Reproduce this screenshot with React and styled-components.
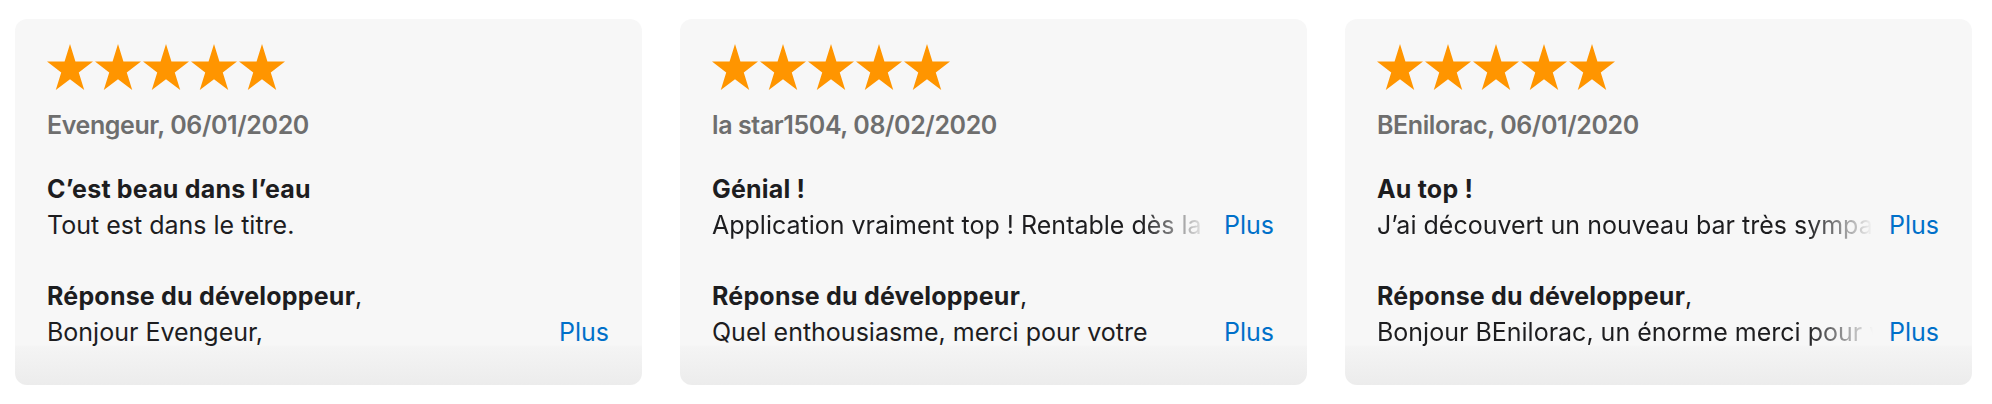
import styled, { createGlobalStyle } from "styled-components";

const reviews = [
  {
    author: "Evengeur, 06/01/2020",
    title: "C’est beau dans l’eau",
    body: "Tout est dans le titre.",
    bodyMore: false,
    reply: "Bonjour Evengeur,",
    replyFade: false,
  },
  {
    author: "la star1504, 08/02/2020",
    title: "Génial !",
    body: "Application vraiment top ! Rentable dès la première utilisation",
    bodyMore: true,
    reply: "Quel enthousiasme, merci pour votre",
    replyFade: false,
  },
  {
    author: "BEnilorac, 06/01/2020",
    title: "Au top !",
    body: "J’ai découvert un nouveau bar très sympa grâce à l’application",
    bodyMore: true,
    reply: "Bonjour BEnilorac, un énorme merci pour votre message",
    replyFade: true,
  },
];

const GlobalStyle = createGlobalStyle`
  html, body {
    margin: 0;
    padding: 0;
    background: #ffffff;
  }
  body {
    font-family: Inter, "Noto Sans", "Liberation Sans", sans-serif;
    color: #1d1d1f;
    -webkit-font-smoothing: antialiased;
  }
`;

const Star = ({ size = 46 }) => (
  <svg width={size} height={size} viewBox="0 0 46 46">
    <polygon
      fill="#ff9500"
      points="23,0 28.43,17.57 46,17.57 31.78,28.43 37.23,46 23,35.14 8.77,46 14.22,28.43 0,17.57 17.57,17.57"
    />
  </svg>
);

const App = () => (
  <>
    <GlobalStyle />
    <Reviews>
      {reviews.map((r) => (
        <Card key={r.author}>
          <Stars>
            {[0, 1, 2, 3, 4].map((i) => (
              <Star key={i} />
            ))}
          </Stars>
          <Author>{r.author}</Author>
          <Title>{r.title}</Title>
          <Row>
            <Text $fade={r.bodyMore}>{r.body}</Text>
            {r.bodyMore && <More>Plus</More>}
          </Row>
          <ReplyTitle>
            <strong>Réponse du développeur</strong>,
          </ReplyTitle>
          <Row>
            <Text $fade={r.replyFade}>{r.reply}</Text>
            <More>Plus</More>
          </Row>
        </Card>
      ))}
    </Reviews>
  </>
);

export default App;

const Reviews = styled.div`
  display: grid;
  grid-template-columns: repeat(3, 627px);
  gap: 38px;
  padding: 19px 20px 0 15px;
`;

const Card = styled.div`
  height: 366px;
  box-sizing: border-box;
  padding: 25px 33px 0 32px;
  border-radius: 12px;
  background: linear-gradient(
    180deg,
    #f7f7f7 0,
    #f7f7f7 calc(100% - 40px),
    #f4f4f4 calc(100% - 38px),
    #ececec 100%
  );
  overflow: hidden;
`;

const Stars = styled.div`
  display: flex;
  gap: 2px;
  height: 46px;
`;

const Author = styled.div`
  margin-top: 17px;
  font-size: 25px;
  line-height: 36px;
  font-weight: 600;
  letter-spacing: -0.4px;
  color: #6e6e6e;
`;

const Title = styled.div`
  margin-top: 28px;
  font-size: 25px;
  line-height: 36px;
  font-weight: 700;
  letter-spacing: 0.2px;
`;

const ReplyTitle = styled.div`
  margin-top: 35px;
  font-size: 25px;
  line-height: 36px;
  font-weight: 400;

  strong {
    font-weight: 700;
    letter-spacing: 0.2px;
  }
`;

const Row = styled.div`
  display: flex;
  align-items: baseline;
  justify-content: space-between;
  font-size: 25px;
  line-height: 36px;
`;

const Text = styled.div`
  flex: ${(p) => (p.$fade ? "1 1 auto" : "0 1 auto")};
  min-width: 0;
  overflow: hidden;
  white-space: nowrap;
  ${(p) =>
    p.$fade &&
    `
    -webkit-mask-image: linear-gradient(to right, #000 calc(100% - 72px), transparent calc(100% - 6px));
    mask-image: linear-gradient(to right, #000 calc(100% - 72px), transparent calc(100% - 6px));
  `}
`;

const More = styled.a`
  flex: none;
  margin-left: 10px;
  color: #0070c9;
  cursor: pointer;
`;
